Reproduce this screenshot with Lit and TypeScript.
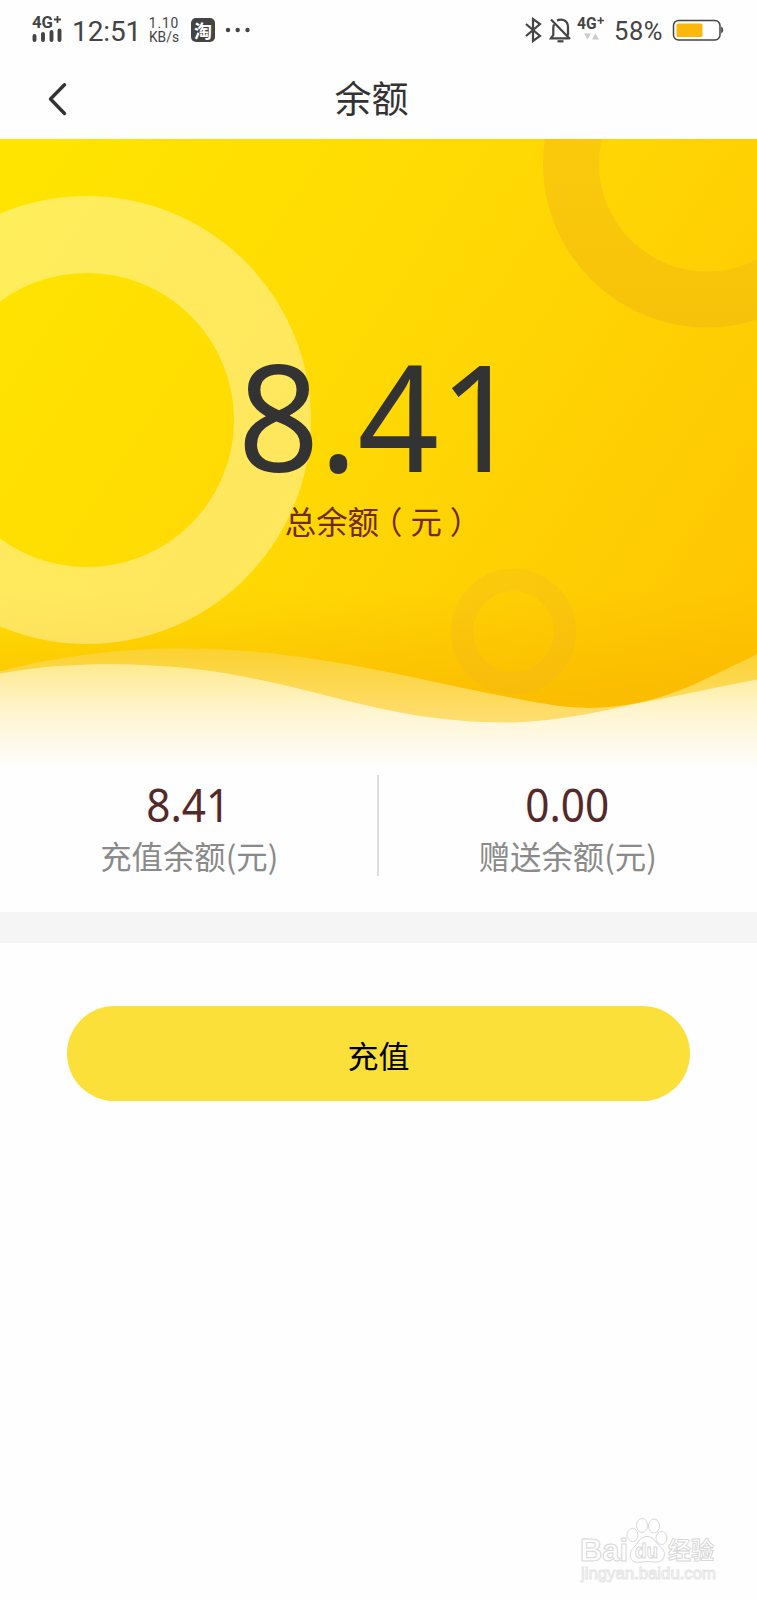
import { LitElement, html, css } from "lit";
import { customElement, property } from "lit/decorators.js";

@customElement("status-bar")
class StatusBar extends LitElement {
  static styles = css`
    :host { display: flex; align-items: center; height: 60px; box-sizing: border-box;
      padding: 0 33px 0 32px; color: #444; font-family: Roboto, "Noto Sans", sans-serif; }
    .signal { display: block; width: 32px; height: 28px; overflow: visible; }
    .time { margin-left: 8px; width: 69px; font-size: 28px; line-height: 32px; letter-spacing: -0.1px; padding-top: 3px; }
    .speed { margin-left: 7px; width: 32px; font-size: 13.8px; line-height: 14px; padding-bottom: 1px; text-align: center; white-space: nowrap; }
    .rate { letter-spacing: .9px; }
    .app { display: flex; align-items: center; justify-content: center; width: 24px; height: 24px; margin-left: 11px;
      border-radius: 5px; background: #444; color: #fff; font: 700 18px/24px "Noto Sans CJK SC", sans-serif; }
    .dots { display: block; width: 26px; height: 6px; margin-left: 10px; }
    .right { display: flex; align-items: center; margin-left: auto; }
    .bt { display: block; width: 18px; height: 26px; }
    .bell { display: block; width: 24px; height: 26px; margin-left: 7px; }
    .net { display: block; width: 28px; height: 28px; margin-left: 4px; overflow: visible; }
    .pct { margin-left: 9px; width: 51px; font-size: 25.5px; line-height: 30px; padding-top: 2px; letter-spacing: .6px; }
    .bat { display: block; width: 52px; height: 23px; margin-left: 7px; }
    text { font-family: Roboto, sans-serif; font-weight: 700; fill: #444; }
  `;
  render() {
    return html`
      <svg class="signal" viewBox="0 0 32 28">
        <text x="0" y="12" font-size="16.5" textLength="21" lengthAdjust="spacingAndGlyphs">4G</text>
        <path d="M22 3.500h7M25.500 0v7" stroke="#444" stroke-width="1.8"/>
        <path d="M2.500 20v4M11 18v6M19.500 16v8M27.500 14.500v9.500" stroke="#444" stroke-width="3.900" stroke-linecap="round"/>
      </svg>
      <div class="time">12:51</div>
      <div class="speed"><span class="rate">1.10</span><br>KB/s</div>
      <div class="app">淘</div>
      <svg class="dots" viewBox="0 0 26 6" fill="#444"><circle cx="3" cy="3" r="2.200"/><circle cx="12.700" cy="3" r="2.200"/><circle cx="22.500" cy="3" r="2.200"/></svg>
      <div class="right">
        <svg class="bt" viewBox="0 0 18 26" fill="none" stroke="#444" stroke-width="2.200">
          <path d="M2 7l14 12-7 5V2l7 5L2 19"/>
        </svg>
        <svg class="bell" viewBox="0 0 24 26" fill="none" stroke="#444" stroke-width="2.200">
          <path d="M8 3.500q3-1.600 6.500-.5Q19 4.700 19 10v8.500M5 7.500Q4.300 9 4.300 11v7L2 21.300h17.500M2 2.500l19 19.500"/><path d="M8.500 24.300h6"/>
        </svg>
        <svg class="net" viewBox="0 0 28 28">
          <text x="0" y="13" font-size="16" textLength="19.500" lengthAdjust="spacingAndGlyphs">4G</text>
          <path d="M20.500 4.500h6.500M23.700 1.300v6.500" stroke="#444" stroke-width="1.700"/>
          <path d="M7 17.500h7l-3.500 6zM15 23.500h7l-3.500-6z" fill="#ccc"/>
        </svg>
        <div class="pct">58%</div>
        <svg class="bat" viewBox="0 0 52 23">
          <rect x="1.500" y="1.500" width="46.500" height="19.500" rx="5" fill="none" stroke="#444" stroke-width="1.500"/>
          <rect x="4.500" y="4.500" width="26" height="13.500" rx="1.500" fill="#fcb80a"/>
          <path d="M49.200 7.500q2 .5 2 3.500t-2 3.500z" fill="#444"/>
        </svg>
      </div>`;
  }
}

@customElement("nav-bar")
class NavBar extends LitElement {
  @property() heading = "";
  static styles = css`
    :host { display: grid; grid-template-columns: 72px 1fr 72px; align-items: center; height: 78.500px;
      color: #333; font-family: "Noto Sans CJK SC", sans-serif; }
    .back { display: block; width: 22px; height: 36px; margin-left: 47px; }
    .title { text-align: center; font-size: 37px; line-height: 54px; padding: 0 14px 4px 0; }
  `;
  render() {
    return html`
      <svg class="back" viewBox="0 0 22 36" fill="none" stroke="#333" stroke-width="3.400" stroke-linecap="round" stroke-linejoin="round"><path d="M17.500 3.800L3.500 18l14 14.500"/></svg>
      <div class="title">${this.heading}</div>`;
  }
}

@customElement("balance-hero")
class BalanceHero extends LitElement {
  static styles = css`
    :host { display: grid; height: 629.500px; font-family: "Noto Sans", "Noto Sans CJK SC", sans-serif; }
    .art, .content { grid-area: 1 / 1; }
    .art { display: block; width: 757px; height: 629.500px; }
    .content { display: flex; flex-direction: column; align-items: center; padding-top: 206px; z-index: 1; }
    .amount { color: #333; font-size: 147.500px; line-height: 140px; transform: scaleX(.968); margin-right: -1px; }
    .label { display: flex; color: #6e2b12; font-family: "Noto Sans CJK SC", sans-serif; font-size: 31.400px; line-height: 46px; margin-left: 1px; margin-top: 13px; }
    .open, .close { width: 31.400px; box-sizing: border-box; }
    .open { margin-left: -8px; margin-right: 8px; }
    .close { margin-left: 8px; margin-right: -8px; }
  `;
  render() {
    return html`
      <svg class="art" viewBox="0 138.500 757 629.500" preserveAspectRatio="none">
        <defs>
          <linearGradient id="sun" gradientUnits="userSpaceOnUse" x1="60" y1="140" x2="757" y2="600">
            <stop offset="0" stop-color="#ffe400"/><stop offset=".5" stop-color="#ffd804"/><stop offset="1" stop-color="#fec602"/>
          </linearGradient>
          <linearGradient id="low" gradientUnits="userSpaceOnUse" x1="0" y1="590" x2="0" y2="710">
            <stop offset="0" stop-color="#f8b200" stop-opacity="0"/><stop offset="1" stop-color="#f8b200" stop-opacity=".6"/>
          </linearGradient>
          <linearGradient id="front" gradientUnits="userSpaceOnUse" x1="0" y1="660" x2="0" y2="768">
            <stop offset="0" stop-color="#fee98a"/><stop offset=".5" stop-color="#fef5d2"/><stop offset="1" stop-color="#fdfefd"/>
          </linearGradient>
          <linearGradient id="back" gradientUnits="userSpaceOnUse" x1="0" y1="648" x2="0" y2="722">
            <stop offset="0" stop-color="#fbd230"/><stop offset="1" stop-color="#fede72"/>
          </linearGradient>
          <linearGradient id="dark" gradientUnits="userSpaceOnUse" x1="0" y1="138" x2="0" y2="326">
            <stop offset="0" stop-color="#fac90c"/><stop offset="1" stop-color="#f7c30a"/>
          </linearGradient>
        </defs>
        <rect y="138" width="757" height="630" fill="url(#sun)"/>
        <rect y="590" width="757" height="178" fill="url(#low)"/>
        <circle cx="87" cy="419.500" r="185.500" fill="none" stroke="#fff" stroke-opacity=".36" stroke-width="77"/>
        <circle cx="707" cy="163" r="136" fill="none" stroke="url(#dark)" stroke-width="56"/>
        <circle cx="513.500" cy="631" r="51.500" fill="none" stroke="#efb52a" stroke-opacity=".24" stroke-width="22"/>
        <path fill="url(#back)" d="M0 671C55 656 120 648 183 648C300 648 400 675 490 693C540 703 560 707 589 707.500C660 707 700 680 757 654V768H0z"/>
        <path fill="url(#front)" d="M0 673C45 665 85 663 130 664C215 666 270 681 338 698C390 711 440 722 507 722C560 721 600 711 637 703C680 695 715 687 757 679V768H0z"/>
      </svg>
      <div class="content">
        <div class="amount">8.41</div>
        <div class="label"><span>总余额</span><span class="open">（</span><span>元</span><span class="close">）</span></div>
      </div>`;
  }
}

@customElement("balance-split")
class BalanceSplit extends LitElement {
  static items = [
    { value: "8.41", label: "充值余额(元)" },
    { value: "0.00", label: "赠送余额(元)" },
  ];
  static styles = css`
    :host { display: grid; grid-template-columns: 1fr 1fr; height: 144px; box-sizing: border-box; padding-top: 7px;
      background: #fdfefd; }
    .cell { height: 101px; text-align: center; }
    .cell + .cell { border-left: 2px solid #dedede; margin-left: -2px; }
    .value { color: #55292a; font-family: "Noto Sans", sans-serif; font-size: 45px; line-height: 60px; transform: scaleX(.94); margin-right: 2px; }
    .label { color: #8a8a8a; font-family: "Noto Sans CJK SC", sans-serif; font-size: 31.400px; line-height: 46px; margin-top: -2px; }
  `;
  render() {
    return BalanceSplit.items.map(
      (i) => html`<div class="cell"><div class="value">${i.value}</div><div class="label">${i.label}</div></div>`
    );
  }
}

@customElement("site-watermark")
class SiteWatermark extends LitElement {
  static styles = css`
    :host { display: block; }
    .mark { display: block; width: 144px; height: 72px; overflow: visible; }
    text { font-family: "Liberation Sans", "Noto Sans CJK SC", sans-serif; font-weight: 700; fill: #fff; stroke: #d8d8d8; stroke-width: 1px; }
    .url { stroke: #e4e4e4; font-weight: 400; stroke-width: .9px; }
  `;
  render() {
    return html`<svg class="mark" viewBox="577 1514 144 72">
      <g fill="#fff" stroke="#d8d8d8">
        <ellipse cx="632.500" cy="1535" rx="5.500" ry="6.500"/><ellipse cx="642" cy="1525.500" rx="5.500" ry="7"/>
        <ellipse cx="654" cy="1526" rx="5.500" ry="7"/><ellipse cx="661.500" cy="1538" rx="5.500" ry="6.500"/>
        <path d="M647 1536.500c7 0 8 6 12.500 9.500c5 4 6 8 4 12c-3 6-10 3.500-16.500 3.500s-13 3-16-3c-2-4 0-9 4-12.500c4.500-4 5-9.500 12-9.500z"/>
      </g>
      <text x="580" y="1561" font-size="31" textLength="48" lengthAdjust="spacingAndGlyphs">Bai</text>
      <text x="635" y="1558" font-size="20" textLength="23" lengthAdjust="spacingAndGlyphs">du</text>
      <text x="668" y="1559" font-size="24" textLength="46" lengthAdjust="spacingAndGlyphs">经验</text>
      <text class="url" x="581" y="1579" font-size="16.500" textLength="135" lengthAdjust="spacingAndGlyphs">jingyan.baidu.com</text>
    </svg>`;
  }
}

@customElement("app-root")
class AppRoot extends LitElement {
  static styles = css`
    :host { display: block; position: relative; width: 757px; height: 1600px; overflow: hidden; background: #fdfefd; }
    .top { background: #fefefe; }
    .gap { height: 31px; background: #f4f5f4; }
    .actions { padding: 63px 67px 0; }
    .recharge { display: block; width: 100%; height: 95px; padding: 2px 0 0; border: 0; border-radius: 47.500px; background: #fce03a;
      color: #000; font-family: "Noto Sans CJK SC", sans-serif; font-size: 31px; line-height: 46px; }
    .watermark { position: absolute; left: 577px; top: 1514px; }
  `;
  render() {
    return html`
      <div class="top"><status-bar></status-bar><nav-bar heading="余额"></nav-bar></div>
      <balance-hero></balance-hero>
      <balance-split></balance-split>
      <div class="gap"></div>
      <div class="actions"><button class="recharge">充值</button></div>
      <site-watermark class="watermark"></site-watermark>`;
  }
}
